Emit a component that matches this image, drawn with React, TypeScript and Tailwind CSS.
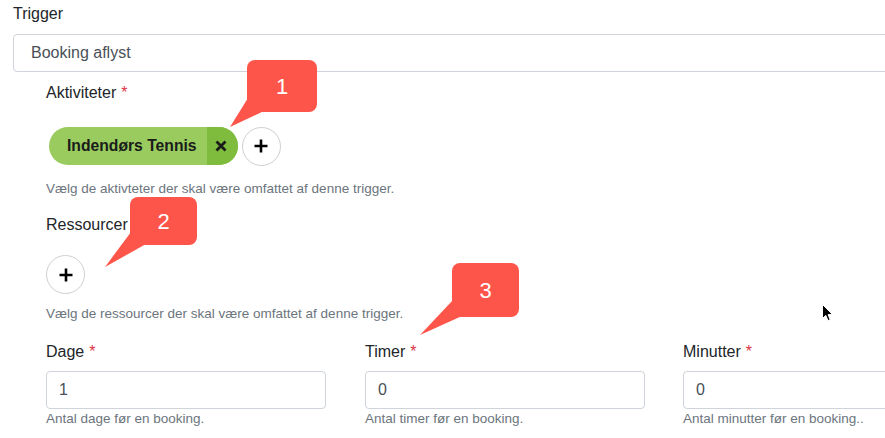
import React from "react";

const font = { fontFamily: '"Liberation Sans", Arial, sans-serif' };

function PlusIcon() {
  return (
    <svg width="16" height="16" viewBox="0 0 16 16">
      <path d="M8 1.5V14.5M1.5 8H14.5" stroke="#000" strokeWidth="2.6" strokeLinecap="butt" />
    </svg>
  );
}

function PlusButton() {
  return (
    <div className="flex h-[39px] w-[39px] items-center justify-center rounded-full border border-[#cfcfcf] bg-white">
      <PlusIcon />
    </div>
  );
}

function Req() {
  return <span className="ml-[5px] text-[#dc3545]">*</span>;
}

function NumberField({ label, value, help, w }: { label: string; value: string; help: string; w: string }) {
  return (
    <div className={`flex shrink-0 flex-col ${w}`}>
      <div className="h-6 text-[16px] leading-6 text-[#212529]">
        {label}
        <Req />
      </div>
      <div className="mt-[7px] flex h-[38px] w-[280px] items-center rounded-[4px] border border-[#ced4da] px-3 text-[16px] text-[#495057]">
        {value}
      </div>
      <div className="h-[19px] text-[13.5px] leading-[19px] text-[#6c757d]">{help}</div>
    </div>
  );
}

function Callout({ n, box, tail }: { n: string; box: string; tail: string }) {
  return (
    <>
      <svg className="pointer-events-none absolute left-0 top-0" width="885" height="438">
        <polygon points={tail} fill="#fe554a" />
      </svg>
      <div
        className={`absolute flex items-center justify-center rounded-[8px] bg-[#fe554a] text-[22px] text-white ${box}`}
      >
        {n}
      </div>
    </>
  );
}

export default function App() {
  return (
    <div className="relative h-[438px] w-[885px] overflow-hidden bg-white" style={font}>
      <div className="flex flex-col pl-[13px] pt-[2px]">
        <div className="h-6 text-[16px] leading-6 text-[#212529]">Trigger</div>
        <div className="mt-2 flex h-[38px] w-[900px] items-center rounded-[4px] border border-[#ced4da] pl-[17px] text-[16px] text-[#495057]">
          Booking aflyst
        </div>

        <div className="flex flex-col pl-[33px]">
          <div className="mt-[9px] h-6 text-[16px] leading-6 text-[#212529]">
            Aktiviteter
            <Req />
          </div>
          <div className="mt-[21px] flex h-[40px] items-center">
            <div className="ml-[3px] flex h-[38px] overflow-hidden rounded-full bg-[#99cb5e]">
              <div className="flex items-center pl-[18px] pr-[10px] text-[15.7px] font-bold text-[#1b1b1b]">
                Indendørs Tennis
              </div>
              <div className="flex w-[31px] items-center justify-center bg-[#7fbc3d] pr-[2px]">
                <svg width="12" height="12" viewBox="0 0 12 12">
                  <path d="M1.5 1.5L10.5 10.5M10.5 1.5L1.5 10.5" stroke="#1b1b1b" strokeWidth="2.8" />
                </svg>
              </div>
            </div>
            <div className="ml-[4px]">
              <PlusButton />
            </div>
          </div>
          <div className="mt-[13px] h-[19px] text-[13.5px] leading-[19px] text-[#6c757d]">
            Vælg de aktivteter der skal være omfattet af denne trigger.
          </div>

          <div className="mt-[15px] h-6 text-[16px] leading-6 text-[#212529]">Ressourcer</div>
          <div className="mt-[18px]">
            <PlusButton />
          </div>
          <div className="mt-[10px] h-[19px] text-[13.5px] leading-[19px] text-[#6c757d]">
            Vælg de ressourcer der skal være omfattet af denne trigger.
          </div>

          <div className="mt-[17px] flex">
            <NumberField label="Dage" value="1" help="Antal dage før en booking." w="w-[319px]" />
            <NumberField label="Timer" value="0" help="Antal timer før en booking." w="w-[318px]" />
            <NumberField label="Minutter" value="0" help="Antal minutter før en booking.." w="w-[300px]" />
          </div>
        </div>
      </div>

      <Callout n="1" box="left-[247px] top-[60px] h-[52px] w-[70px]" tail="248,98 230,127 264,111" />
      <Callout n="2" box="left-[130px] top-[197px] h-[48px] w-[67px]" tail="131,232 105,267 146,244" />
      <Callout n="3" box="left-[452px] top-[263px] h-[54px] w-[67px]" tail="453,300 420,335 462,316" />

      <svg className="pointer-events-none absolute left-[821px] top-[303px]" width="14" height="20" viewBox="0 0 14 20">
        <path d="M1.5 1.5V15.5L4.8 12.4L7 17.6L9.2 16.7L7.1 11.6H11.6Z" fill="#000" stroke="#fff" strokeWidth="1" />
      </svg>
    </div>
  );
}
